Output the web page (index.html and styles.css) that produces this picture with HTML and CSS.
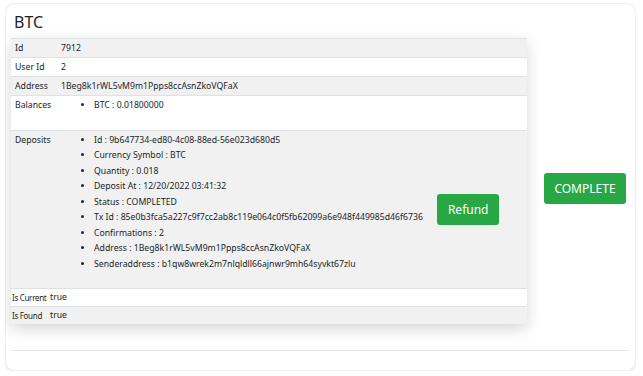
FILE: index.html
```html
<!DOCTYPE html>
<html lang="en">
<head>
    <meta charset="UTF-8">
    <meta name="viewport" content="width=device-width, initial-scale=1.0">
    <title>BTC</title>
    <link rel="stylesheet" href="styles.css">
</head>
<body>
    <div class="card">
        <h2 class="title">BTC</h2>
        <div class="card-body">
            <div class="details">
                <div class="row grey">
                    <div class="label">Id</div>
                    <div class="value">7912</div>
                </div>
                <div class="row">
                    <div class="label">User Id</div>
                    <div class="value">2</div>
                </div>
                <div class="row grey">
                    <div class="label">Address</div>
                    <div class="value">1Beg8k1rWL5vM9m1Ppps8ccAsnZkoVQFaX</div>
                </div>
                <div class="row list-row">
                    <div class="label">Balances</div>
                    <div class="value">
                        <ul>
                            <li>BTC : 0.01800000</li>
                        </ul>
                    </div>
                </div>
                <div class="row grey list-row">
                    <div class="label">Deposits</div>
                    <div class="value deposit">
                        <ul>
                            <li>Id : 9b647734-ed80-4c08-88ed-56e023d680d5</li>
                            <li>Currency Symbol : BTC</li>
                            <li>Quantity : 0.018</li>
                            <li>Deposit At : 12/20/2022 03:41:32</li>
                            <li>Status : COMPLETED</li>
                            <li>Tx Id : 85e0b3fca5a227c9f7cc2ab8c119e064c0f5fb62099a6e948f449985d46f6736</li>
                            <li>Confirmations : 2</li>
                            <li>Address : 1Beg8k1rWL5vM9m1Ppps8ccAsnZkoVQFaX</li>
                            <li>Senderaddress : b1qw8wrek2m7nlqldll66ajnwr9mh64syvkt67zlu</li>
                        </ul>
                        <button class="btn">Refund</button>
                    </div>
                </div>
                <div class="row small">
                    <div class="label">Is Current</div>
                    <div class="value">true</div>
                </div>
                <div class="row grey small">
                    <div class="label">Is Found</div>
                    <div class="value">true</div>
                </div>
            </div>
            <div class="actions">
                <button class="btn big">COMPLETE</button>
            </div>
        </div>
        <hr class="divider">
    </div>
</body>
</html>
```

FILE: styles.css
```css
body {
    margin: 3px 7px 0 5px;
    font-family: "Noto Sans", "Open Sans", sans-serif;
    color: #212529;
    background: white;
}
.card {
    background: white;
    border: 1px solid #f0f0f0;
    border-radius: 10px;
    box-shadow: 0 1px 4px rgba(0, 0, 0, 0.12);
    padding: 0 6px 18px 5px;
    height: 348px;
}
.title {
    font-size: 16px;
    font-weight: normal;
    margin: 0;
    padding: 8px 3px 6px;
    line-height: 20px;
}
.card-body {
    display: flex;
}
.details {
    width: 516px;
    box-shadow: 0 5px 14px rgba(0, 0, 0, 0.16);
    font-size: 8.7px;
}
.row {
    display: flex;
    border-top: 1px solid #dee2e6;
    line-height: 14px;
    white-space: nowrap;
}
.grey {
    background: #f1f1f1;
}
.label {
    width: 42px;
    padding: 2px 0 2px 4px;
    flex-shrink: 0;
}
.value {
    padding: 2px 4px;
}
ul {
    margin: 0 0 14px;
    padding-left: 33px;
}
li {
    line-height: 15.5px;
}
.list-row .label,
.list-row .value {
    padding-top: 2px;
}
.list-row .label {
    line-height: 15.5px;
}
.deposit {
    display: flex;
    align-items: center;
}
.btn {
    font-family: "Noto Sans", "Open Sans", sans-serif;
    background: #28a745;
    color: white;
    border: none;
    border-radius: 3px;
    font-size: 12px;
    line-height: 15px;
    padding: 8px 11px;
    margin-left: 14px;
    cursor: pointer;
}
.big {
    padding: 8px 10px;
    margin: 0;
}
.small {
    line-height: 13px;
}
.small .label {
    width: 38px;
    padding-left: 1px;
    font-size: 8px;
    letter-spacing: -0.3px;
}
.small .value {
    padding-left: 0;
}
.actions {
    flex: 1;
    display: flex;
    align-items: center;
    justify-content: center;
    padding: 14px 0 0 14px;
}
.divider {
    border: none;
    border-top: 1px solid #e3e3e3;
    margin: 26px 0 0;
}
```
